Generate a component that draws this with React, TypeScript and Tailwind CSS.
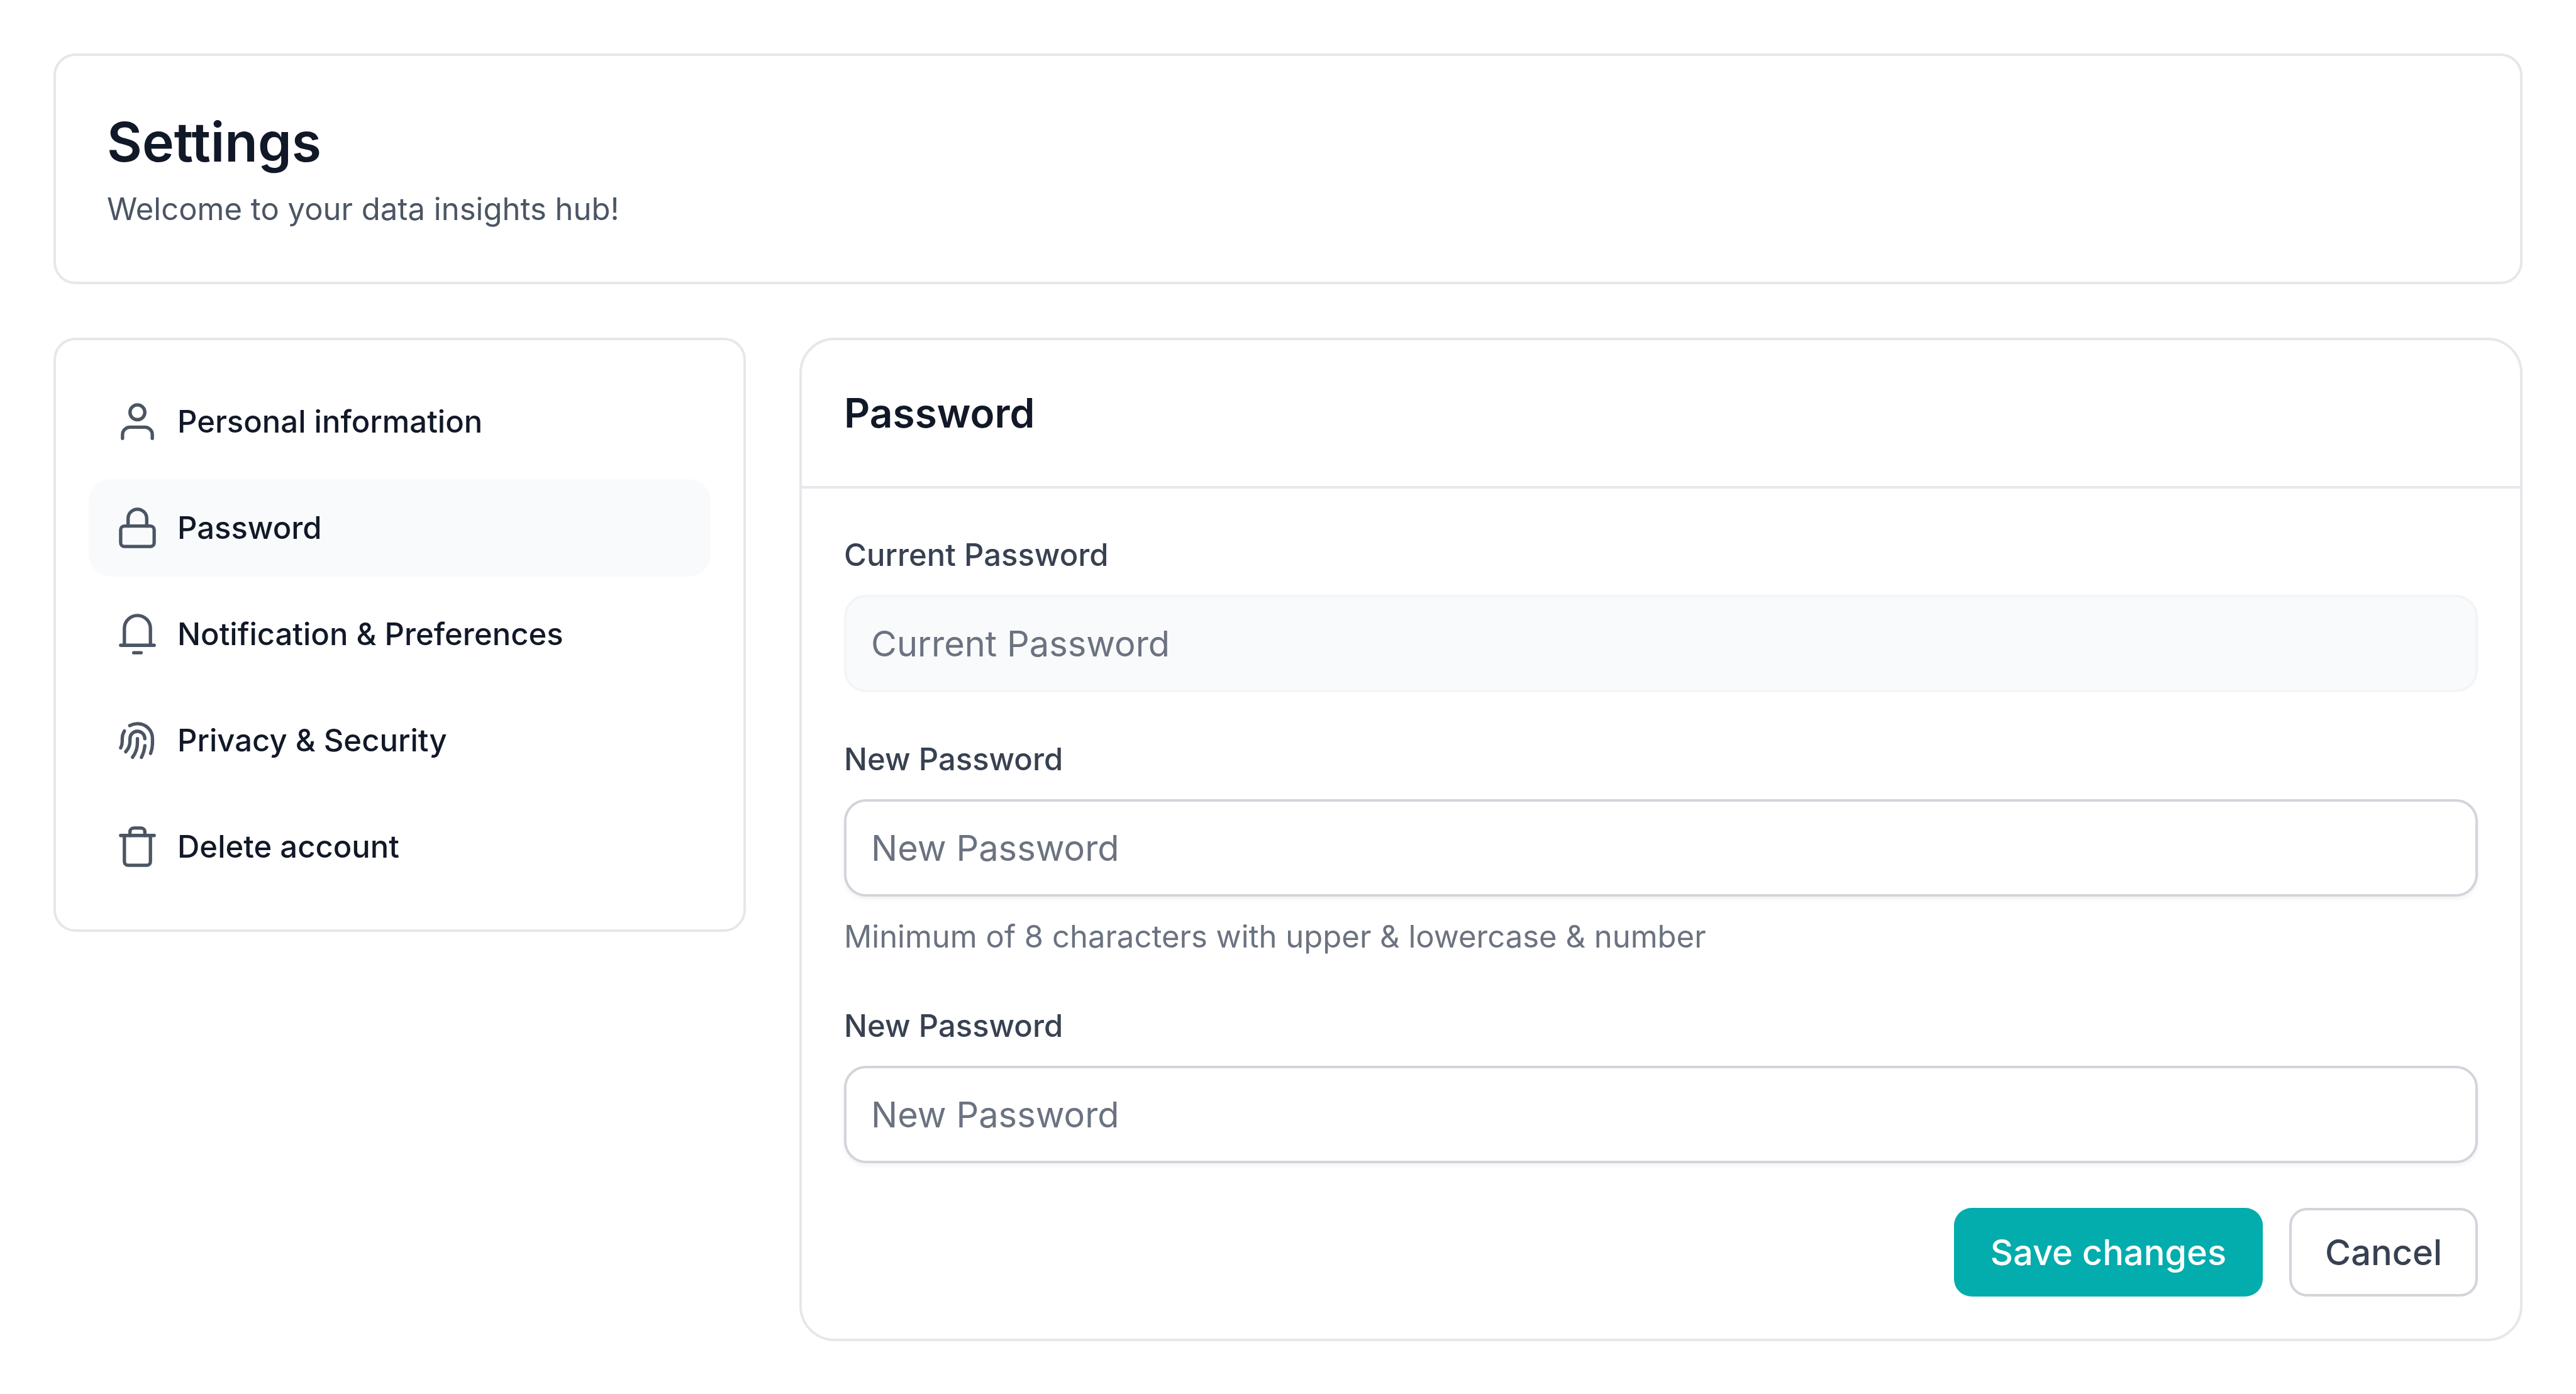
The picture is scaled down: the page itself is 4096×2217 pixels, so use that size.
import type { ReactNode } from "react";

function Icon({ children }: { children: ReactNode }) {
  return (
    <svg
      viewBox="0 0 20 20"
      fill="none"
      stroke="currentColor"
      strokeWidth="1.5"
      strokeLinecap="round"
      strokeLinejoin="round"
      aria-hidden="true"
      className="size-[71px] shrink-0 text-[#4b5563]"
    >
      {children}
    </svg>
  );
}

const navItems: { label: string; icon: ReactNode; active?: boolean }[] = [
  {
    label: "Personal information",
    icon: (
      <Icon>
        <circle cx="10" cy="5.83" r="3.33" />
        <path d="M3.33 17.5v-1.67a3.33 3.33 0 0 1 3.33-3.33h6.67a3.33 3.33 0 0 1 3.34 3.33v1.67" />
      </Icon>
    ),
  },
  {
    label: "Password",
    active: true,
    icon: (
      <Icon>
        <rect x="2.5" y="9.17" width="15" height="9.16" rx="1.67" />
        <path d="M5.83 9.17V5.83a4.17 4.17 0 0 1 8.34 0v3.34" />
      </Icon>
    ),
  },
  {
    label: "Notification & Preferences",
    icon: (
      <Icon>
        <path d="M4.17 15V7.5a5.83 5.83 0 0 1 11.66 0V15" />
        <path d="M2.5 15h15" />
        <path d="M8.33 18.33h3.34" />
      </Icon>
    ),
  },
  {
    label: "Privacy & Security",
    icon: (
      <Icon>
        <path d="M6.55 3.4A7.5 7.5 0 0 1 10 2.5a6.67 6.67 0 0 1 6.75 6.67v2.3c0 1.5-.35 3-.85 4.36" />
        <path d="M4.17 5.8C3.5 6.9 3.2 8.1 3.2 9.17v1.3c0 1.1-.25 2.1-.7 2.9" />
        <path d="M13.33 9.25a3.33 3.33 0 0 0-6.66 0v1.1c0 1.9-.7 3.4-1.92 4.75" />
        <path d="M10 9.17v1.9c0 2.4-.75 4.6-2.17 6.5" />
        <path d="M13.33 12.4c-.2 1.9-.7 3.6-1.53 5.2" />
      </Icon>
    ),
  },
  {
    label: "Delete account",
    icon: (
      <Icon>
        <path d="M4.17 5v11.67c0 .92.74 1.66 1.66 1.66h8.34c.92 0 1.66-.74 1.66-1.66V5" />
        <path d="M2.5 5h15" />
        <path d="M6.67 5V3.33c0-.92.74-1.66 1.66-1.66h3.34c.92 0 1.66.74 1.66 1.66V5" />
      </Icon>
    ),
  },
];

function PasswordField({
  id,
  label,
  hint,
  disabled,
}: {
  id: string;
  label: string;
  hint?: string;
  disabled?: boolean;
}) {
  return (
    <div className="flex flex-col gap-[28px]">
      <label htmlFor={id} className="text-[49px] leading-[71px] font-medium text-[#374151]">
        {label}
      </label>
      <input
        id={id}
        type="password"
        placeholder={label}
        disabled={disabled}
        aria-describedby={hint ? `${id}-hint` : undefined}
        className="h-[155px] w-full rounded-[35px] border-4 border-[#d1d5db] bg-white px-[39px] text-[56px] text-[#111827] shadow-[0_4px_7px_rgba(16,24,40,0.05)] placeholder:text-[#6b7280] disabled:border-[#f3f4f6] disabled:bg-[#f9fafb] disabled:shadow-none"
      />
      {hint && (
        <p id={`${id}-hint`} className="text-[49px] leading-[71px] text-[#6b7280]">
          {hint}
        </p>
      )}
    </div>
  );
}

export default function App() {
  return (
    <div className="flex min-h-screen flex-col gap-[85px] bg-white p-[85px] pb-[84px] font-['Inter',sans-serif] text-[#111827]">
      <header className="flex flex-col gap-[14px] rounded-[35px] border-4 border-[#e5e7eb] px-[81px] pt-[81px] pb-[80px]">
        <h1 className="text-[86px] leading-[113px] font-semibold">Settings</h1>
        <p className="text-[49px] leading-[71px] text-[#4b5563]">Welcome to your data insights hub!</p>
      </header>

      <div className="flex items-start gap-[85px]">
        <nav
          aria-label="Settings"
          className="w-[1101px] shrink-0 rounded-[35px] border-4 border-[#e5e7eb] px-[52px] pt-[52px] pb-[54px]"
        >
          <ul className="flex flex-col gap-[14px]">
            {navItems.map((item) => (
              <li key={item.label}>
                <a
                  href="#"
                  aria-current={item.active ? "page" : undefined}
                  className={
                    item.active
                      ? "flex items-center gap-[28px] rounded-[35px] bg-[#f9fafb] p-[42px] text-[49px] leading-[71px] font-medium"
                      : "flex items-center gap-[28px] rounded-[35px] p-[42px] text-[49px] leading-[71px] font-medium"
                  }
                >
                  {item.icon}
                  {item.label}
                </a>
              </li>
            ))}
          </ul>
        </nav>

        <main className="min-w-0 flex-1 rounded-[56px] border-4 border-[#e5e7eb]">
          <div className="border-b-4 border-[#e5e7eb] px-[67px] py-[66px]">
            <h2 className="text-[64px] leading-[100px] font-semibold">Password</h2>
          </div>
          <form
            className="flex flex-col gap-[71px] px-[67px] pt-[70px] pb-[67px]"
            onSubmit={(event) => event.preventDefault()}
          >
            <PasswordField id="current-password" label="Current Password" disabled />
            <PasswordField
              id="new-password"
              label="New Password"
              hint="Minimum of 8 characters with upper & lowercase & number"
            />
            <PasswordField id="confirm-password" label="New Password" />
            <div className="flex justify-end gap-[42px]">
              <button
                type="submit"
                className="h-[141px] rounded-[28px] bg-[#03acad] px-[58px] text-[56px] font-medium text-white"
              >
                Save changes
              </button>
              <button
                type="button"
                className="h-[141px] rounded-[28px] border-4 border-[#d1d5db] bg-white px-[53px] text-[56px] font-medium text-[#374151]"
              >
                Cancel
              </button>
            </div>
          </form>
        </main>
      </div>
    </div>
  );
}
